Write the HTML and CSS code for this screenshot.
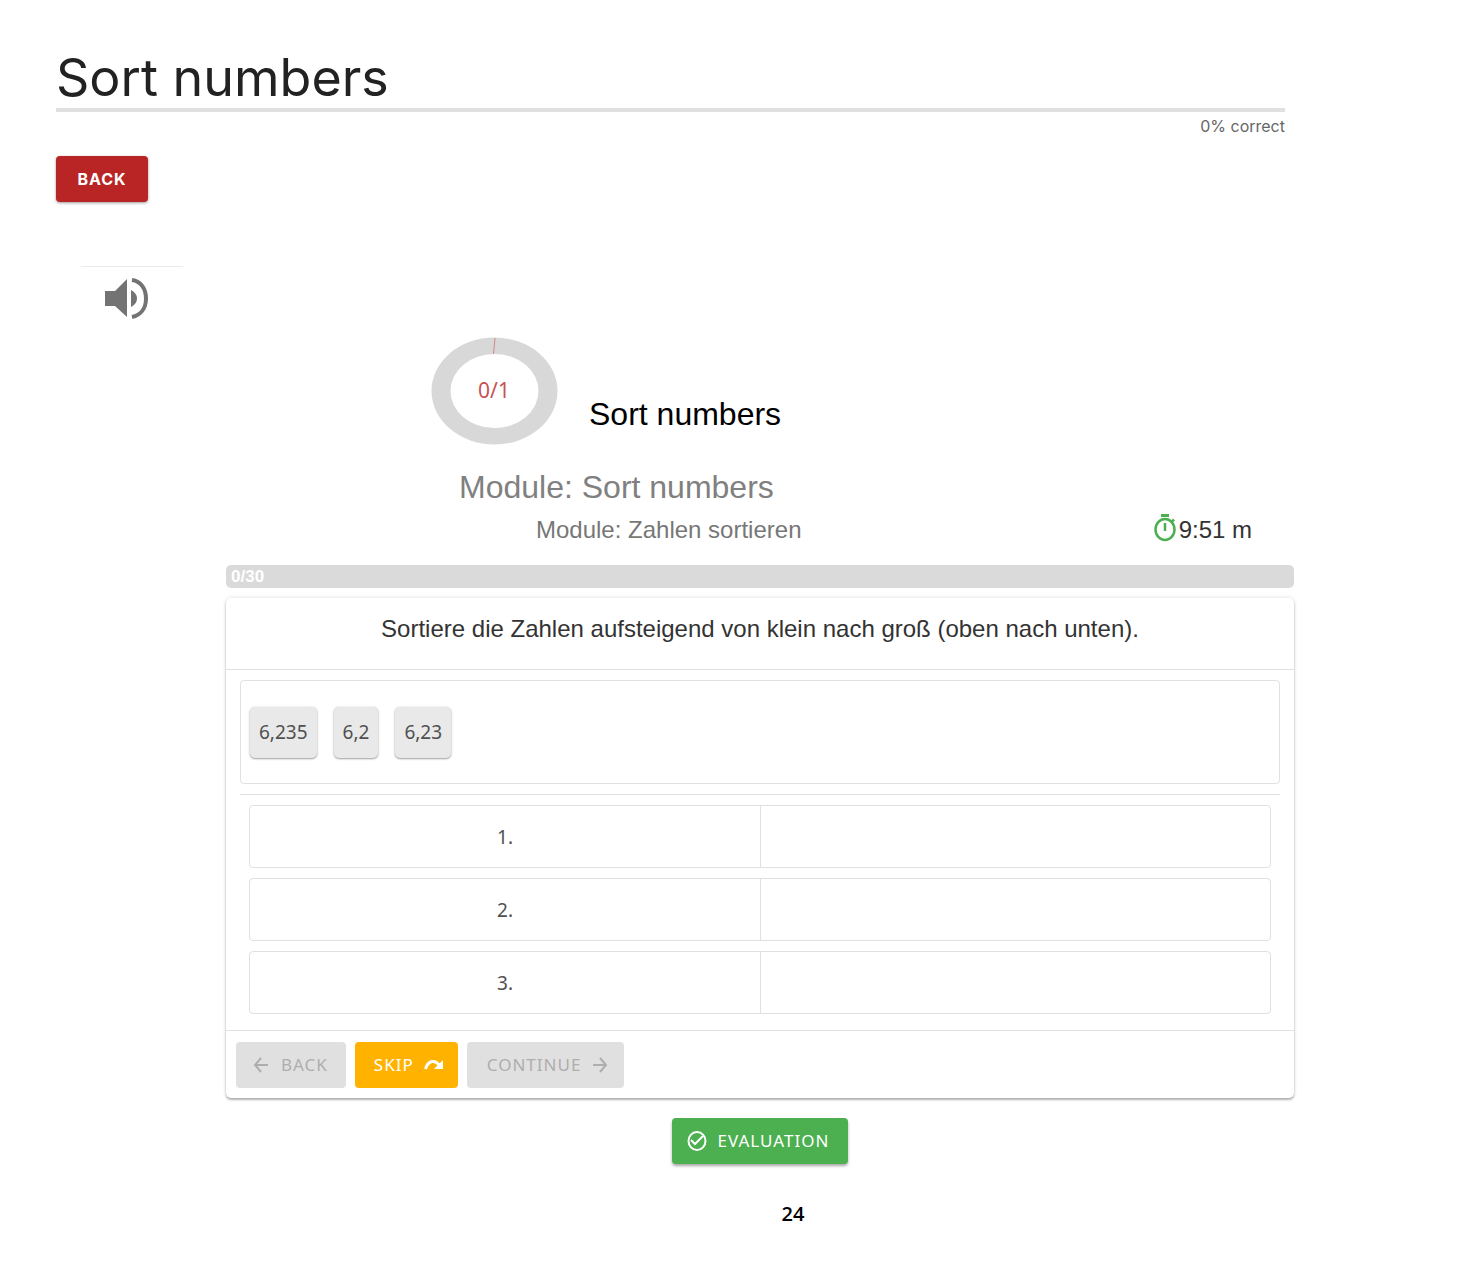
FILE: index.html
```html
<!DOCTYPE html>
<html lang="en">
<head>
<meta charset="utf-8">
<meta name="viewport" content="width=device-width, initial-scale=1">
<title>Sort numbers</title>
<link rel="stylesheet" href="styles.css">
</head>
<body>
<header class="page-header">
  <h1 class="page-title">Sort numbers</h1>
  <p class="page-score">0% correct</p>
  <button class="btn btn-exit" type="button">BACK</button>
</header>
<div class="audio">
  <button class="audio-button" type="button" aria-label="Read aloud">
    <svg width="44" height="44" viewBox="0 0 44 44" aria-hidden="true">
      <path d="M0 13H10L22 1V39L10 28H0Z" fill="#737373"/>
      <path d="M26 12Q32 15 32 20.500Q32 26 26 29Z" fill="#737373"/>
      <path d="M27 2C36 3 41 11 41 20.500C41 30 36 37 27 39" fill="none" stroke="#737373" stroke-width="4"/>
    </svg>
  </button>
</div>
<main class="exercise">
  <section class="summary">
    <svg class="ring" width="128" height="108" viewBox="0 0 128 108" role="img" aria-label="0/1">
      <path fill="#d8d8d8" fill-rule="evenodd" d="M64.500 0.500A63 53.500 0 0 1 64.500 107.500A63 53.500 0 0 1 64.500 0.500ZM64.500 17A44 37 0 0 0 64.500 91A44 37 0 0 0 64.500 17Z"/>
      <path d="M65 1L63.500 17" stroke="#d08a8a" stroke-width="1"/>
      <text class="ring-text" x="64" y="61" text-anchor="middle">0/1</text>
    </svg>
    <h2 class="summary-title">Sort numbers</h2>
  </section>
  <p class="module">Module: Sort numbers</p>
  <div class="status">
    <p class="module-original">Module: Zahlen sortieren</p>
    <p class="timer">
      <svg width="23" height="28" viewBox="0 0 23 28" fill="none" stroke="#4caf50" aria-hidden="true">
        <ellipse cx="11" cy="15.500" rx="9.500" ry="10.500" stroke-width="2.500"/>
        <path d="M7 1.500H15" stroke-width="3"/>
        <path d="M11 9V17" stroke-width="2.500"/>
        <path d="M17.500 8L20 5.500" stroke-width="2.500"/>
      </svg>
      <span>9:51 m</span>
    </p>
  </div>
  <div class="progress">0/30</div>
  <section class="card">
    <p class="prompt">Sortiere die Zahlen aufsteigend von klein nach groß (oben nach unten).</p>
    <div class="work">
      <div class="pool">
        <button class="chip" type="button">6,235</button>
        <button class="chip" type="button">6,2</button>
        <button class="chip" type="button">6,23</button>
      </div>
      <ol class="slots">
        <li class="slot"><span class="slot-cell">1.</span><span class="slot-cell"></span></li>
        <li class="slot"><span class="slot-cell">2.</span><span class="slot-cell"></span></li>
        <li class="slot"><span class="slot-cell">3.</span><span class="slot-cell"></span></li>
      </ol>
    </div>
    <div class="actions">
      <button class="btn btn-off btn-prev" type="button" disabled>
        <svg width="16" height="18" viewBox="0 0 16 18" fill="none" stroke="currentColor" stroke-width="2" aria-hidden="true"><path d="M15 9H2M8 2L2 9L8 16"/></svg>
        BACK
      </button>
      <button class="btn btn-skip" type="button">SKIP
        <svg width="20" height="12" viewBox="0 0 20 12" aria-hidden="true"><path d="M1.500 10C4 1 11 0 16 7" fill="none" stroke="currentColor" stroke-width="3"/><path d="M19 1V10H10Z" fill="currentColor"/></svg>
      </button>
      <button class="btn btn-off btn-next" type="button" disabled>CONTINUE
        <svg width="16" height="18" viewBox="0 0 16 18" fill="none" stroke="currentColor" stroke-width="2" aria-hidden="true"><path d="M1 9H14M8 2L14 9L8 16"/></svg>
      </button>
    </div>
  </section>
  <button class="btn btn-evaluate" type="button">
    <svg width="20" height="20" viewBox="0 0 20 20" fill="none" stroke="currentColor" stroke-width="2" aria-hidden="true"><ellipse cx="10" cy="10" rx="8.500" ry="9"/><path d="M4 9L8 13L16 5"/></svg>
    EVALUATION
  </button>
</main>
<footer class="page-number">24</footer>
</body>
</html>
```
FILE: styles.css
```css
* {
  box-sizing: border-box;
}

body {
  margin: 0;
  background: #fff;
  color: #333;
  font-family: "Liberation Sans", Arial, sans-serif;
}

h1, h2, p, ol {
  margin: 0;
  padding: 0;
  font-weight: 400;
}

button {
  margin: 0;
  border: 0;
  font: inherit;
}

svg {
  display: block;
  flex: none;
}

.page-header {
  padding: 48px 183px 0 56px;
}

.page-title {
  border-bottom: 4px solid #e0e0e0;
  color: #222;
  font: 400 52px/60px Inter, Roboto, sans-serif;
}

.page-score {
  margin: 4px 0 20px;
  color: #666;
  font: 400 16px/20px Inter, Roboto, sans-serif;
  text-align: right;
}

.btn {
  display: flex;
  align-items: center;
  height: 46px;
  border-radius: 4px;
  color: #fff;
  font: 400 17px/24px "Noto Sans", sans-serif;
  letter-spacing: 1px;
  white-space: nowrap;
}

.btn-exit {
  justify-content: center;
  min-width: 92px;
  background: #b92525;
  box-shadow: 0 1px 3px rgba(0, 0, 0, 0.4);
  font: 700 16px/20px Inter, sans-serif;
  letter-spacing: 1px;
}

.audio {
  width: 102px;
  margin: 64px 0 0 81px;
  padding: 11px 0 14px 24px;
  border-top: 1px solid #ebebeb;
}

.audio-button {
  display: block;
  padding: 0;
  background: none;
}

.exercise {
  padding: 0 174px 0 226px;
}

.summary {
  display: flex;
  align-items: center;
  gap: 31px;
  padding: 1px 0 0 204px;
}

.ring-text {
  fill: #c65353;
  font: 400 21px "Noto Sans", sans-serif;
}

.summary-title {
  padding-top: 46px;
  color: #000;
  font-size: 32px;
  line-height: 40px;
}

.module {
  margin-top: 22px;
  padding-left: 233px;
  color: #808080;
  font-size: 32px;
  line-height: 40px;
}

.status {
  display: flex;
  align-items: center;
  justify-content: space-between;
  height: 48px;
  padding: 0 42px 2px 310px;
}

.module-original {
  color: #777;
  font-size: 24px;
  line-height: 32px;
}

.timer {
  display: flex;
  align-items: flex-start;
  gap: 2px;
  font-size: 24px;
  line-height: 32px;
}

.progress {
  margin-top: 10px;
  padding-left: 5px;
  border-radius: 5px;
  background: #dadada;
  color: #fff;
  font-size: 17px;
  font-weight: 700;
  line-height: 23px;
}

.card {
  margin-top: 10px;
  border-radius: 5px;
  background: #fff;
  box-shadow: 0 2px 2px rgba(0, 0, 0, 0.26), 0 0 4px rgba(0, 0, 0, 0.14);
}

.prompt {
  padding: 15px 16px 24px;
  border-bottom: 1px solid #e0e0e0;
  font-size: 24px;
  line-height: 32px;
  text-align: center;
}

.work {
  padding: 10px 14px 16px;
}

.pool {
  display: flex;
  align-items: center;
  gap: 17px;
  height: 104px;
  padding: 0 9px;
  border: 1px solid #e0e0e0;
  border-radius: 4px;
}

.chip {
  height: 51px;
  padding: 0 9px;
  border-radius: 5px;
  background: #e9e9e9;
  box-shadow: 0 1px 2px rgba(0, 0, 0, 0.35), 0 0 3px rgba(0, 0, 0, 0.1);
  color: #505050;
  font: 400 19px/24px "Noto Sans", sans-serif;
}

.slots {
  display: grid;
  gap: 10px;
  margin-top: 10px;
  padding: 10px 9px 0;
  border-top: 1px solid #e0e0e0;
  list-style: none;
}

.slot {
  display: grid;
  grid-template-columns: 1fr 1fr;
  height: 63px;
  border: 1px solid #e0e0e0;
  border-radius: 4px;
}

.slot-cell {
  display: flex;
  align-items: center;
  justify-content: center;
  color: #505050;
  font: 400 19px/24px "Noto Sans", sans-serif;
}

.slot-cell + .slot-cell {
  border-left: 1px solid #e0e0e0;
}

.actions {
  display: flex;
  gap: 9px;
  padding: 11px 10px 10px;
  border-top: 1px solid #e0e0e0;
}

.btn-off {
  background: #e0e0e0;
  color: #aeaeae;
}

.btn-prev {
  gap: 12px;
  padding: 0 18px 0 17px;
}

.btn-skip {
  gap: 10px;
  padding: 0 14px 0 19px;
  background: #ffb300;
}

.btn-next {
  gap: 11px;
  padding: 0 16px 0 20px;
}

.btn-evaluate {
  gap: 11px;
  margin: 20px auto 0;
  padding: 0 19px 0 15px;
  background: #4caf50;
  box-shadow: 0 2px 3px rgba(0, 0, 0, 0.35);
}

.page-number {
  padding: 36px 0 40px 118px;
  color: #000;
  font: 600 20px/28px "Open Sans", sans-serif;
  text-align: center;
}
```
